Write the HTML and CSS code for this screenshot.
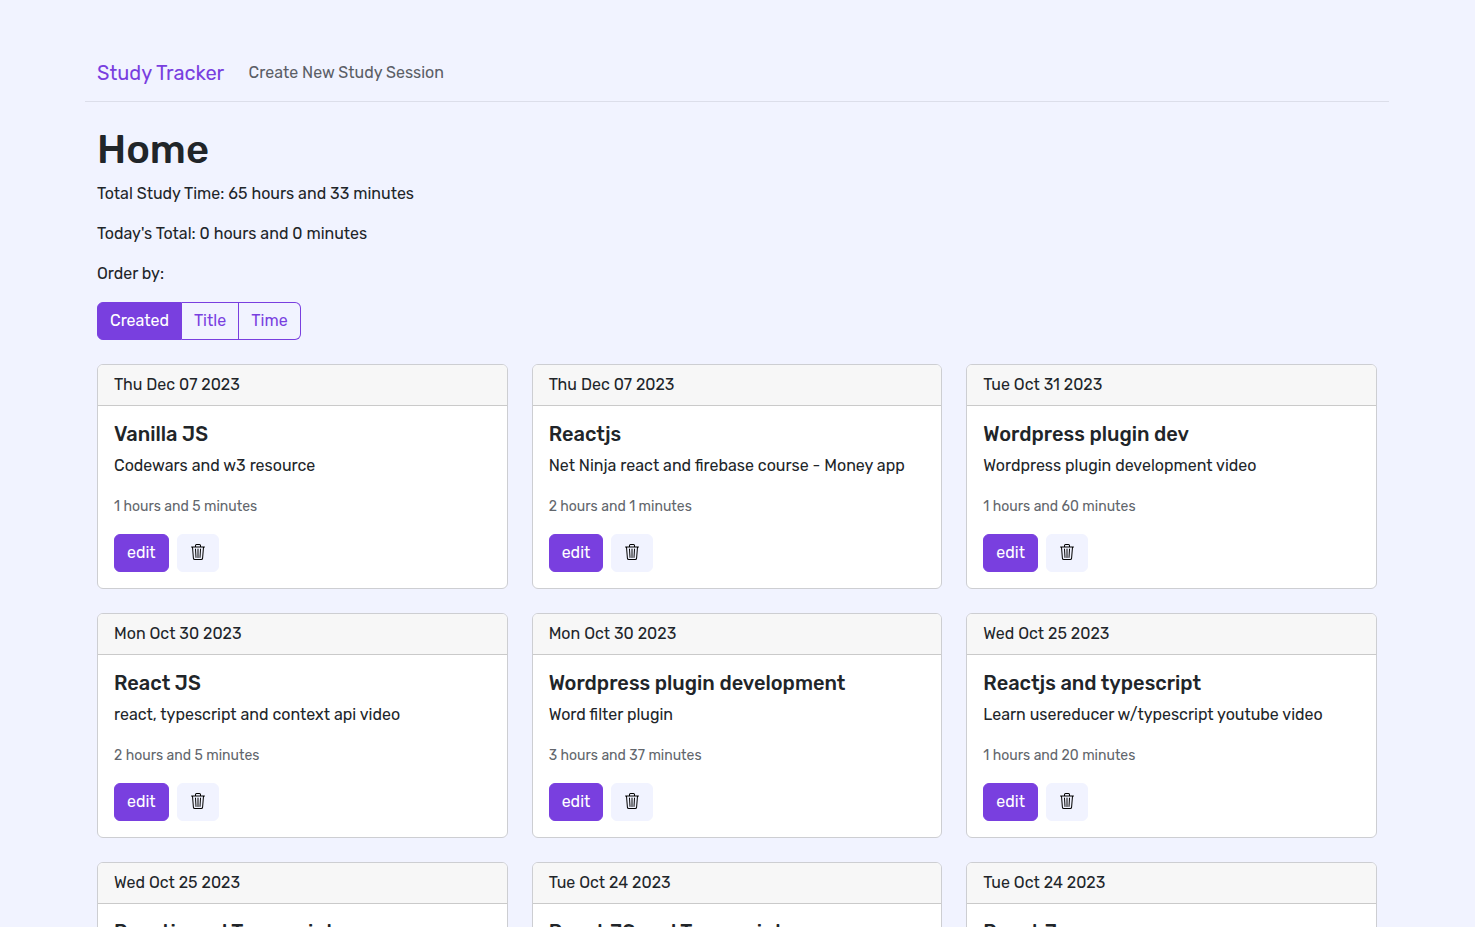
FILE: index.html
```
<!DOCTYPE html>
<html lang="en">
<head>
<meta charset="utf-8">
<title>Study Tracker</title>
<link rel="stylesheet" href="styles.css">
</head>
<body>
<svg class="sprite" aria-hidden="true">
  <symbol id="trash" viewBox="0 0 16 16">
    <path fill="currentColor" d="M6.5 1h3a.5.5 0 0 1 .5.5v1H6v-1a.5.5 0 0 1 .5-.5ZM11 2.5v-1A1.5 1.5 0 0 0 9.5 0h-3A1.5 1.5 0 0 0 5 1.500v1H2.506a.58.58 0 0 0-.01 0H1.500a.5.5 0 0 0 0 1h.538l.853 10.660A2 2 0 0 0 4.885 16h6.230a2 2 0 0 0 1.994-1.840l.853-10.660h.538a.5.5 0 0 0 0-1h-.995a.59.59 0 0 0-.01 0H11Zm1.958 1-.846 10.580a1 1 0 0 1-.997.920h-6.230a1 1 0 0 1-.997-.920L3.042 3.500h9.916Zm-7.487 1a.5.5 0 0 1 .528.470l.5 8.500a.5.5 0 0 1-.998.060L5 5.030a.5.5 0 0 1 .470-.530Zm5.058 0a.5.5 0 0 1 .470.530l-.5 8.500a.5.5 0 1 1-.998-.060l.5-8.500a.5.5 0 0 1 .528-.470ZM8 4.500a.5.5 0 0 1 .5.5v8.500a.5.5 0 0 1-1 0V5a.5.5 0 0 1 .5-.5Z"/>
  </symbol>
</svg>
<div class="container">
  <nav class="navbar">
    <a class="brand">Study Tracker</a>
    <a class="nav-link">Create New Study Session</a>
  </nav>
  <main class="content">
    <h1>Home</h1>
    <p>Total Study Time: 65 hours and 33 minutes</p>
    <p>Today's Total: 0 hours and 0 minutes</p>
    <p>Order by:</p>
    <div class="btn-group">
      <button class="seg active">Created</button><button class="seg seg-title">Title</button><button class="seg seg-time">Time</button>
    </div>
    <div class="grid">
      <article class="card">
        <header>Thu Dec 07 2023</header>
        <div class="card-body">
          <h2>Vanilla JS</h2>
          <p>Codewars and w3 resource</p>
          <p><small>1 hours and 5 minutes</small></p>
          <div class="actions"><button class="edit">edit</button><button class="remove" aria-label="Delete"><svg><use href="#trash"/></svg></button></div>
        </div>
      </article>
      <article class="card">
        <header>Thu Dec 07 2023</header>
        <div class="card-body">
          <h2>Reactjs</h2>
          <p>Net Ninja react and firebase course - Money app</p>
          <p><small>2 hours and 1 minutes</small></p>
          <div class="actions"><button class="edit">edit</button><button class="remove" aria-label="Delete"><svg><use href="#trash"/></svg></button></div>
        </div>
      </article>
      <article class="card">
        <header>Tue Oct 31 2023</header>
        <div class="card-body">
          <h2>Wordpress plugin dev</h2>
          <p>Wordpress plugin development video</p>
          <p><small>1 hours and 60 minutes</small></p>
          <div class="actions"><button class="edit">edit</button><button class="remove" aria-label="Delete"><svg><use href="#trash"/></svg></button></div>
        </div>
      </article>
      <article class="card">
        <header>Mon Oct 30 2023</header>
        <div class="card-body">
          <h2>React JS</h2>
          <p>react, typescript and context api video</p>
          <p><small>2 hours and 5 minutes</small></p>
          <div class="actions"><button class="edit">edit</button><button class="remove" aria-label="Delete"><svg><use href="#trash"/></svg></button></div>
        </div>
      </article>
      <article class="card">
        <header>Mon Oct 30 2023</header>
        <div class="card-body">
          <h2>Wordpress plugin development</h2>
          <p>Word filter plugin</p>
          <p><small>3 hours and 37 minutes</small></p>
          <div class="actions"><button class="edit">edit</button><button class="remove" aria-label="Delete"><svg><use href="#trash"/></svg></button></div>
        </div>
      </article>
      <article class="card">
        <header>Wed Oct 25 2023</header>
        <div class="card-body">
          <h2>Reactjs and typescript</h2>
          <p>Learn usereducer w/typescript youtube video</p>
          <p><small>1 hours and 20 minutes</small></p>
          <div class="actions"><button class="edit">edit</button><button class="remove" aria-label="Delete"><svg><use href="#trash"/></svg></button></div>
        </div>
      </article>
      <article class="card">
        <header>Wed Oct 25 2023</header>
        <div class="card-body">
          <h2>Reactjs and Typescript</h2>
        </div>
      </article>
      <article class="card">
        <header>Tue Oct 24 2023</header>
        <div class="card-body">
          <h2>React JS and Typescript</h2>
        </div>
      </article>
      <article class="card">
        <header>Tue Oct 24 2023</header>
        <div class="card-body">
          <h2>React Js</h2>
        </div>
      </article>
    </div>
  </main>
</div>
</body>
</html>
```
FILE: styles.css
```
* { box-sizing: border-box; }

html, body { height: 100%; }

body {
  margin: 0;
  overflow: hidden;
  background: #f1f3ff;
  color: #212529;
  font: 400 16px/24px Rubik, Roboto, sans-serif;
}

.sprite { display: none; }

h1, h2, p { margin: 0; }

.container {
  width: 1304px;
  margin-left: 85px;
  padding-top: 45px;
}

.navbar {
  display: flex;
  align-items: center;
  gap: 24.4px;
  height: 57px;
  padding: 0 12px;
  border-bottom: 1px solid #dcdeea;
}

.brand {
  color: #793fdf;
  font-size: 20px;
  line-height: 30px;
}

.nav-link { color: #5b5e66; }

.content { padding: 24px 12px 0; }

h1 {
  margin-bottom: 8px;
  font-size: 40px;
  line-height: 48px;
  font-weight: 500;
}

.content > p { margin-bottom: 16px; }

.btn-group { display: flex; margin-bottom: 24px; }

button {
  height: 38px;
  margin: 0;
  padding: 6px 12px;
  border: 1px solid #793fdf;
  border-radius: 6px;
  font: inherit;
  text-align: center;
}

.seg {
  padding: 6px 0;
  border-radius: 0;
  background: transparent;
  color: #793fdf;
}

.seg-title { width: 57px; border-left: 0; }

.seg-time {
  width: 62px;
  border-left: 0;
  border-radius: 0 6px 6px 0;
}

.seg.active {
  width: 85px;
  border-radius: 6px 0 0 6px;
  background: #793fdf;
  color: #fff;
}

.grid {
  display: grid;
  grid-template-columns: repeat(3, 1fr);
  gap: 24px;
}

.card {
  height: 225px;
  overflow: hidden;
  border: 1px solid #cdced2;
  border-radius: 6px;
  background: #fff;
}

.card header {
  height: 41px;
  padding: 8px 16px;
  border-bottom: 1px solid #cacaca;
  background: #f7f7f7;
}

.card-body { padding: 16px; }

.card h2 {
  margin-bottom: 8px;
  font-size: 20px;
  line-height: 24px;
  font-weight: 500;
}

.card p { height: 24px; margin-bottom: 16px; }

.card small {
  color: #62666c;
  font-size: 14px;
}

.actions { display: flex; gap: 8px; }

.edit {
  width: 54.6px;
  background: #793fdf;
  color: #fff;
}

.remove {
  display: grid;
  place-items: center;
  width: 42px;
  border-color: #f1f3ff;
  background: #f1f3ff;
  color: #000;
}

.remove svg { width: 16px; height: 16px; margin-top: -2px; }
```
